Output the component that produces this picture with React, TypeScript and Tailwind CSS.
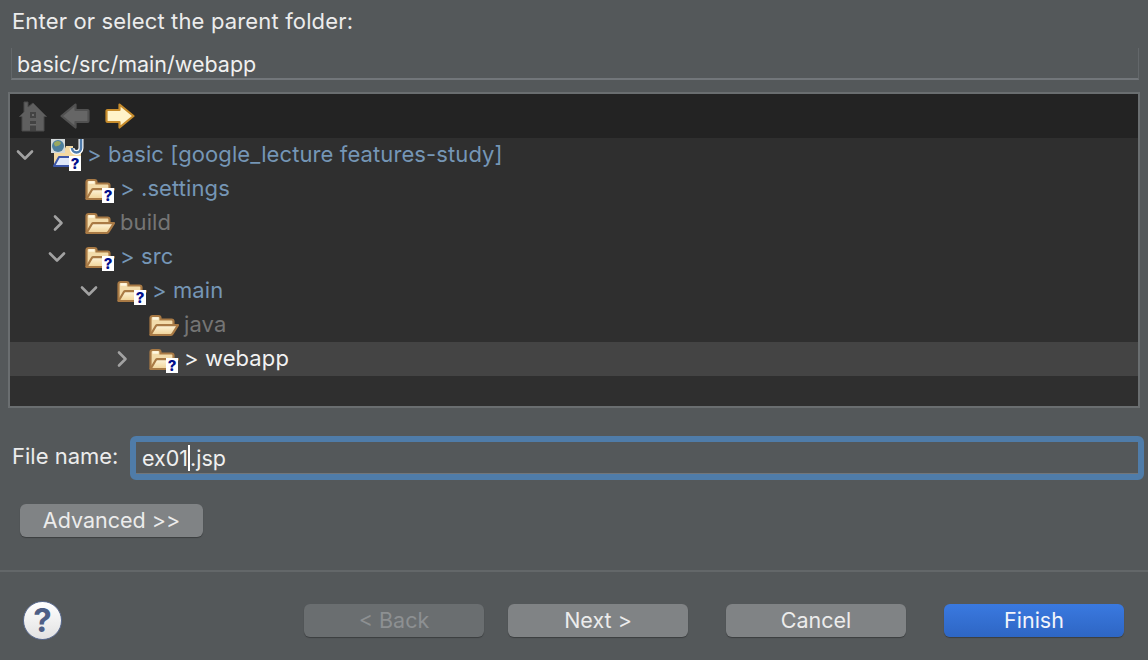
import React from 'react';

interface TreeRow {
  label: string;
  indent: number;
  chevron?: 'down' | 'right';
  unknown?: boolean;
  muted?: boolean;
  selected?: boolean;
  project?: boolean;
}

const rows: TreeRow[] = [
  { label: '> basic [google_lecture features-study]', indent: 0, chevron: 'down', project: true },
  { label: '> .settings', indent: 1, unknown: true },
  { label: 'build', indent: 1, chevron: 'right', muted: true },
  { label: '> src', indent: 1, chevron: 'down', unknown: true },
  { label: '> main', indent: 2, chevron: 'down', unknown: true },
  { label: 'java', indent: 3, muted: true },
  { label: '> webapp', indent: 3, chevron: 'right', unknown: true, selected: true },
];

// small white tile with a navy question mark, overlaid on folder icons
const UnknownBadge = ({ className }: { className: string }) => (
  <span className={`absolute flex h-[15px] w-[12px] items-center justify-center bg-white text-[15px] leading-none font-extrabold text-[#000f8c] ${className}`}>
    ?
  </span>
);

const FolderIcon = () => (
  <svg width="30" height="23" viewBox="0 0 30 23" className="block">
    <defs>
      <linearGradient id="folderFront" x1="0" y1="0" x2="0" y2="1">
        <stop offset="0" stopColor="#fef6dc" />
        <stop offset="1" stopColor="#f0d296" />
      </linearGradient>
    </defs>
    <path d="M1.500 21V4a2 2 0 0 1 2-2h6a2 2 0 0 1 2 2v1.500h11a2 2 0 0 1 2 2V11" fill="#f3dcab" stroke="#a97a45" strokeWidth="2.200" />
    <path d="M1.500 21 7 11.800a1.500 1.500 0 0 1 1.200-.7H29L23.500 19.800a2 2 0 0 1-1.600 1.200z" fill="url(#folderFront)" stroke="#a97a45" strokeWidth="2.200" strokeLinejoin="round" />
    <rect x="3.500" y="3.200" width="6" height="2.500" fill="#fff8e2" />
  </svg>
);

const ProjectIcon = () => (
  <span className="relative block h-[33px] w-[36px]">
    <svg width="36" height="33" viewBox="0 0 36 33" className="absolute top-0 left-0">
      <path d="M4 28V13h10l2-5h7v5h8v15z" fill="#f3d9a2" />
      <path d="M4 28 9 19h21l-5 9z" fill="#dfe8fa" stroke="#3c56a8" strokeWidth="2" strokeLinejoin="round" />
      <rect x="1" y="1" width="14" height="14" fill="#d3d9da" />
      <circle cx="8" cy="8" r="6" fill="#4d7f9d" />
      <path d="M4 5c3-3 6-2 7 0-1 2-2 3-4 3-1 1-3 0-3-3z" fill="#9aa85f" />
      <path d="M31 1v9a4.500 4.500 0 0 1-9 0" fill="none" stroke="#ffffff" strokeWidth="5" />
      <path d="M31 1v9a4.500 4.500 0 0 1-9 0" fill="none" stroke="#4f7cad" strokeWidth="2.600" />
    </svg>
    <UnknownBadge className="top-[18px] left-[19px]" />
  </span>
);

const Chevron = ({ dir }: { dir: 'down' | 'right' }) => (
  <svg width="18" height="18" viewBox="0 0 18 18" fill="none" stroke="#a2a2a2" strokeWidth="2.600" strokeLinecap="round" strokeLinejoin="round">
    {dir === 'down' ? <path d="M2 5.500 9 12.500l7-7" /> : <path d="M7 2.500 13.500 9 7 15.500" />}
  </svg>
);

const HomeIcon = () => (
  <svg width="28" height="31" viewBox="0 0 28 31">
    <path d="M5 1h4v5l5-4 13.500 13.500H25V30H3V15.500H.5L5 11z" fill="#5f5f5f" stroke="#4a4a4a" strokeWidth="1" />
    <rect x="11" y="11" width="6" height="6" fill="#434343" />
    <rect x="13" y="13" width="2" height="2" fill="#6a6a6a" />
    <rect x="11" y="20" width="6" height="10" fill="#434343" />
    <rect x="11" y="23" width="6" height="1.500" fill="#6a6a6a" />
  </svg>
);

const ArrowIcon = ({ dir, fill, stroke }: { dir: 'left' | 'right'; fill: string; stroke: string }) => (
  <svg width="30" height="26" viewBox="0 0 30 26" className={dir === 'left' ? '-scale-x-100' : ''}>
    <path d="M2.500 7H14.500V1.500L28.500 13 14.500 24.500V19H2.500a1 1 0 0 1-1-1V8a1 1 0 0 1 1-1z" fill={fill} stroke={stroke} strokeWidth="2.200" strokeLinejoin="round" />
  </svg>
);

const HelpIcon = () => (
  <span className="flex h-[39px] w-[39px] items-center justify-center rounded-full border-[1.500px] border-[#5b6c92] bg-gradient-to-b from-white to-[#e2e2e2] text-[33px] leading-none font-bold text-[#4e5f86]">
    ?
  </span>
);

const DialogButton = ({ label, width, className = '' }: { label: string; width: string; className?: string }) => (
  <button className={`h-[33px] rounded-[6px] text-[21.500px] leading-none shadow-[0_1px_1px_rgba(0,0,0,0.3)] ${width} ${className}`}>
    {label}
  </button>
);

const Row = ({ row }: { row: TreeRow }) => {
  const paddings = ['pl-[6px]', 'pl-[38px]', 'pl-[70px]', 'pl-[102px]'];
  const color = row.selected ? 'text-[#f2f2f2]' : row.muted ? 'text-[#757575]' : 'text-[#7596b6]';
  return (
    <div className={`flex h-[34px] items-center ${paddings[row.indent]} ${row.selected ? 'bg-[#444444]' : ''}`}>
      <span className="flex w-[18px] items-center justify-center">
        {row.chevron && <Chevron dir={row.chevron} />}
      </span>
      {row.project ? (
        <span className="ml-[16px] -mt-[1px] w-[37px]">
          <ProjectIcon />
        </span>
      ) : (
        <span className="relative ml-[19px] w-[35px]">
          <FolderIcon />
          {row.unknown && <UnknownBadge className="top-[10px] left-[17px]" />}
        </span>
      )}
      <span className={`-mt-[2px] text-[22px] leading-none tracking-[0.1px] whitespace-nowrap ${color}`}>{row.label}</span>
    </div>
  );
};

export default function App() {
  return (
    <div className="flex h-[660px] w-[1148px] flex-col overflow-hidden bg-[#54585a] font-['Inter','Liberation_Sans',sans-serif] text-[#ececec]">
      <div className="h-[48px] pt-[8px] pl-[12px] text-[22px] leading-[26px] tracking-[0.15px] whitespace-nowrap">Enter or select the parent folder:</div>

      <div className="ml-[11px] h-[32px] w-[1128px] border-b-2 border-l border-r border-b-[#72767a] border-l-[#63676a] border-r-[#63676a] pl-[5px] text-[21.500px] leading-[33px] text-[#f0f0f0]">
        basic/src/main/webapp
      </div>

      <div className="mt-[12px] ml-[8px] h-[316px] w-[1132px] border-2 border-[#6a6e70] bg-[#2f2f2f]">
        <div className="flex h-[44px] items-center gap-[13px] bg-[#232323] pl-[9px]">
          <HomeIcon />
          <ArrowIcon dir="left" fill="#666666" stroke="#515151" />
          <span className="ml-[2px]">
            <ArrowIcon dir="right" fill="#fff3c9" stroke="#c78c2c" />
          </span>
        </div>
        {rows.map((row) => (
          <Row key={row.label} row={row} />
        ))}
      </div>

      <div className="mt-[28px] flex h-[44px] items-center">
        <label className="ml-[12px] -mt-[4px] w-[118px] text-[22px] leading-none">File name:</label>
        <div className="flex h-[44px] w-[1014px] items-center rounded-[6px] border-[6px] border-[#4f7ca9] bg-[#54585a] pl-[6px] text-[21.500px] text-[#f0f0f0] shadow-[inset_0_-1px_0_#72767a]">
          <span>ex01</span>
          <span className="h-[26px] w-[2px] bg-white" />
          <span>.jsp</span>
        </div>
      </div>

      <div className="mt-[24px] ml-[20px]">
        <DialogButton label="Advanced >>" width="w-[183px]" className="bg-[#808385] text-[#ececec]" />
      </div>

      <div className="mt-[33px] h-[2px] bg-[#636769]" />

      <div className="mt-[32px] flex items-start pl-[23px]">
        <span className="-mt-[3px] w-[281px]">
          <HelpIcon />
        </span>
        <DialogButton label="< Back" width="w-[180px]" className="bg-[#6a6e70] text-[#8d9092]" />
        <DialogButton label="Next >" width="w-[180px]" className="ml-[24px] bg-[#808385] text-[#ececec]" />
        <DialogButton label="Cancel" width="w-[180px]" className="ml-[38px] bg-[#808385] text-[#ececec]" />
        <DialogButton label="Finish" width="w-[180px]" className="ml-[38px] bg-gradient-to-b from-[#3a79e0] to-[#2e66c4] text-[#f2f5fb]" />
      </div>
    </div>
  );
}
